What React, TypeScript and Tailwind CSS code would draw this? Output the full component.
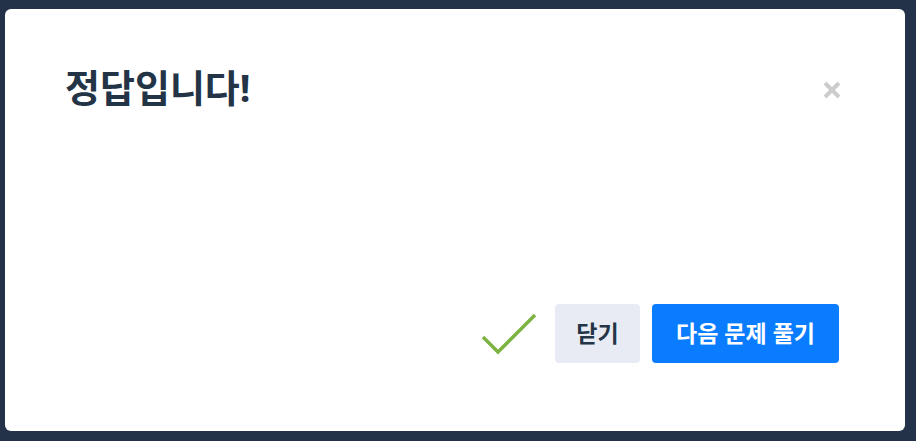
export default function App() {
  return (
    <div
      className="w-[916px] h-[441px] bg-[#243249] pt-[9px] pl-[5px] overflow-hidden"
      style={{ fontFamily: '"Noto Sans", "Noto Sans CJK KR", sans-serif' }}
    >
      <div className="w-[900px] h-[422px] bg-white rounded-[6px] flex flex-col px-[60px] pt-[52px] pb-[68px]">
        {/* Header */}
        <div className="flex items-start justify-between">
          <h1 className="text-[38px] leading-[52px] font-bold text-[#243447]">
            정답입니다!
          </h1>
          <button className="mt-[19px] mr-[3px] text-[#cccccc]">
            <svg width="20" height="20" viewBox="0 0 20 20">
              <path
                d="M3 3 L17 17 M17 3 L3 17"
                stroke="currentColor"
                strokeWidth="4"
              />
            </svg>
          </button>
        </div>

        {/* Footer */}
        <div className="mt-auto flex items-center justify-end gap-3 pr-[6px]">
          <svg width="56" height="44" viewBox="0 0 56 44" className="mr-[6px]">
            <path
              d="M2 25 L17 40 L54 3"
              fill="none"
              stroke="#7cb342"
              strokeWidth="3.5"
            />
          </svg>
          <button className="h-[59px] w-[85px] rounded-[4px] bg-[#e8ebf3] text-[23px] font-semibold text-[#243447]">
            닫기
          </button>
          <button className="h-[59px] w-[187px] rounded-[4px] bg-[#0a7cff] text-[23px] font-semibold text-white">
            다음 문제 풀기
          </button>
        </div>
      </div>
    </div>
  );
}
